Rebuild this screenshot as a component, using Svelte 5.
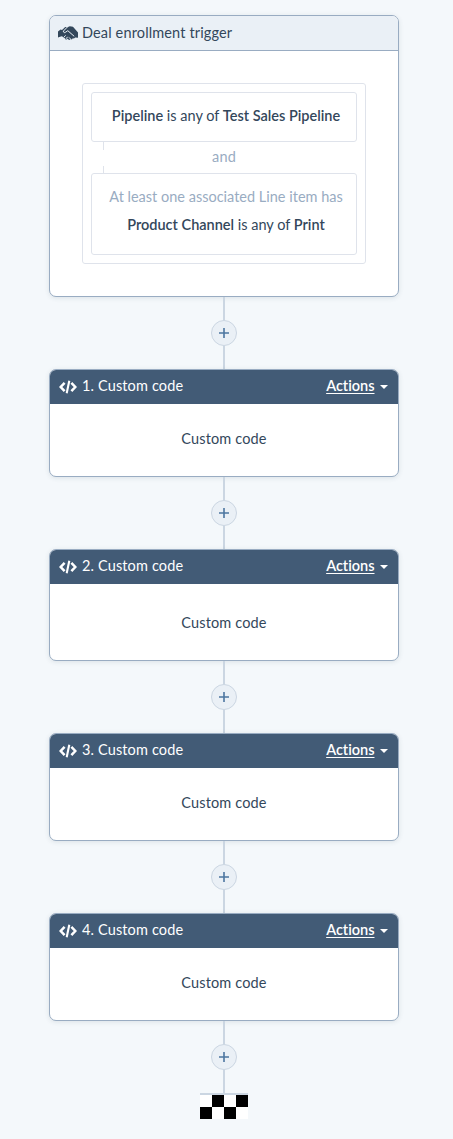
<script>
  const steps = [
    { title: '1. Custom code', body: 'Custom code', height: 108 },
    { title: '2. Custom code', body: 'Custom code', height: 112, nudge: true },
    { title: '3. Custom code', body: 'Custom code', height: 108 },
    { title: '4. Custom code', body: 'Custom code', height: 108 }
  ];
</script>

{#snippet connector()}
  <div class="connector">
    <button class="add" aria-label="Add">
      <svg width="12" height="12" viewBox="0 0 12 12"><path d="M6 1v10M1 6h10" stroke="#4c76a0" stroke-width="1.6" /></svg>
    </button>
  </div>
{/snippet}

<main class="flow">
  <section class="card trigger">
    <header class="trigger-head">
      <svg class="hands" width="20" height="15" viewBox="0 0 20 15">
        <path fill="#33475b" d="M0 5.6 2.6 3.6 4 4 7.2.9 9.4 1.2 11.8.2l3.2.6 5 5.6v5.4l-2.8-.2-1.2.9-1.2-.3-.9 1.2-1.5-.4-.6 1-1.5-.4-1.3-1.2-.5 1.3-1.5-.6-.2-1-1.6-.1-.3-1.3-1.4-.4L0 11.6z" />
        <path fill="none" stroke="#eaf0f6" stroke-width="1" d="M9.4 1 5.4 5.1c-.2 1.6 1.2 1.9 2.2 1.1l2.2-1.5 6.4 5.6M5.4 11.8l2.2-2.4M8 12.8l1.6-2M11 11.4l1.7 1.8" />
      </svg>
      <span>Deal enrollment trigger</span>
    </header>
    <div class="group">
      <div class="rule single"><p class="line"><b>Pipeline</b> is any of <b>Test Sales Pipeline</b></p></div>
      <div class="and"><span>and</span></div>
      <div class="rule double">
        <p class="line muted">At least one associated Line item has</p>
        <p class="line chan"><b>Product Channel</b> is any of <b>Print</b></p>
      </div>
    </div>
  </section>

  {#each steps as step}
    {@render connector()}
    <section class="card" style="height: {step.height}px">
      <header class="step-head">
        <svg width="18" height="14" viewBox="0 0 18 14" fill="none" stroke="#fff" stroke-width="2.5">
          <path d="M5.6 2.8 1.7 7l3.9 4.2M12.4 2.8 16.3 7l-3.9 4.2" />
          <path d="M10.3.8 7.7 13.2" stroke-width="2.1" />
        </svg>
        <span>{step.title}</span>
        <a class="actions" href="#actions">Actions</a>
        <i class="caret"></i>
      </header>
      <div class="body" class:nudge={step.nudge}>{step.body}</div>
    </section>
  {/each}
  {@render connector()}
  <div class="finish"></div>
</main>

<style>
  :global(body) { background: #f4f8fb; }
  .flow {
    box-sizing: border-box;
    width: 453px;
    height: 1139px;
    padding: 15px 0 0 49px;
    background: #f4f8fb;
    color: #33475b;
    font: 400 14.5px/20px Lato, "Liberation Sans", sans-serif;
    font-variant-ligatures: none;
    letter-spacing: 0.14px;
    display: flex;
    flex-direction: column;
  }
  .card {
    box-sizing: border-box;
    flex: none;
    width: 350px;
    border: 1px solid #99acc2;
    border-radius: 7px;
    background: #fff;
    box-shadow: 0 1px 5px rgba(45, 62, 80, 0.12);
    overflow: hidden;
    display: flex;
    flex-direction: column;
  }
  .trigger { height: 282px; }
  header { display: flex; align-items: center; box-sizing: border-box; flex: none; }
  .trigger-head {
    height: 35px;
    padding: 0 8px 1px;
    background: #eaf0f6;
    border-bottom: 1px solid #99acc2;
  }
  .hands { margin-right: 4px; margin-top: 2px; }
  .group {
    box-sizing: border-box;
    width: 284px;
    height: 181px;
    margin: 32px 0 0 32px;
    padding: 8px;
    border: 1px solid #dfe3eb;
    border-radius: 3px;
  }
  .rule {
    box-sizing: border-box;
    border: 1px solid #dfe3eb;
    border-radius: 3px;
    padding-left: 4px;
    display: flex;
    flex-direction: column;
    align-items: center;
    letter-spacing: 0;
  }
  .single { height: 50px; padding-top: 13px; }
  .double { height: 82px; padding-top: 13px; }
  .line { margin: 0; white-space: nowrap; }
  .chan { margin-top: 8px; }
  .muted, .and { color: #99acc2; }
  .and {
    box-sizing: border-box;
    height: 31px;
    padding-bottom: 1px;
    display: flex;
    align-items: center;
    justify-content: center;
    background: linear-gradient(#dfe3eb 0 8px, transparent 8px 24px, #dfe3eb 24px) 12px 0 / 1px 31px no-repeat;
  }
  b { font-weight: 600; }
  .connector {
    width: 350px;
    height: 72px;
    flex: none;
    display: flex;
    align-items: center;
    justify-content: center;
    background: linear-gradient(#cbd6e2, #cbd6e2) 174px 0 / 2px 100% no-repeat;
  }
  .add {
    box-sizing: border-box;
    width: 26px;
    height: 26px;
    padding: 0;
    border: 1px solid #cbd6e2;
    border-radius: 50%;
    background: #eaf0f6;
    display: flex;
    align-items: center;
    justify-content: center;
  }
  .step-head { height: 34px; padding: 0 10px 2px 9px; background: #425b76; color: #fff; }
  .step-head svg { margin-top: 1px; }
  .step-head span { margin-left: 5px; }
  .actions {
    margin-left: auto;
    color: #fff;
    font-weight: 600;
    letter-spacing: 0;
    text-decoration: underline;
    text-underline-offset: 2px;
  }
  .caret {
    margin: 2px 0 0 5.5px;
    border: 4.5px solid transparent;
    border-top-color: #fff;
    border-bottom: 0;
  }
  .body { flex: 1; display: flex; align-items: center; justify-content: center; padding-bottom: 2px; }
  .nudge { padding: 2px 0 0; }
  .finish {
    width: 48px;
    height: 24px;
    margin-left: 151px;
    border-top: 2px solid #cbd6e2;
    background: conic-gradient(#000 25%, #fff 0 50%, #000 0 75%, #fff 0) 0 0 / 24px 24px;
  }
</style>
